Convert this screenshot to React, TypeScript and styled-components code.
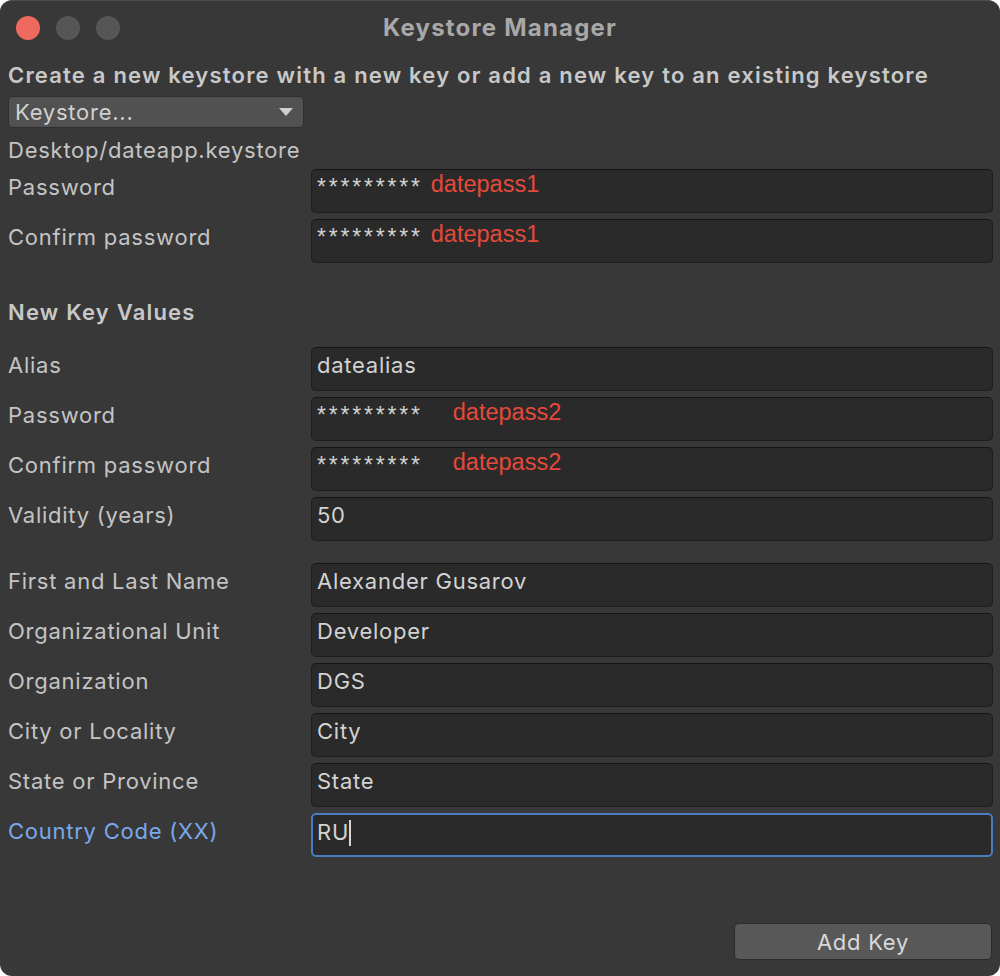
import styled, { createGlobalStyle } from "styled-components";

const GlobalStyle = createGlobalStyle`
    html, body {
        margin: 0;
        padding: 0;
        background: #ffffff;
    }
    body {
        font-family: Inter, "Noto Sans", sans-serif;
    }
`

const Window = styled.div`
    width: 1000px;
    height: 976px;
    box-sizing: border-box;
    background: #383838;
    border-radius: 12px;
    border-top: 1px solid #4e4e4e;
    display: flex;
    flex-direction: column;
    overflow: hidden;
    color: #c4c4c4;
    letter-spacing: 0.75px;
`
const TitleBar = styled.div`
    position: relative;
    height: 53px;
    display: flex;
    align-items: center;
    justify-content: center;
`
const Lights = styled.div`
    position: absolute;
    left: 16px;
    top: 15px;
    display: flex;
    gap: 16px;
`
const Light = styled.span<{ $color: string }>`
    width: 24px;
    height: 24px;
    border-radius: 50%;
    background: ${props => props.$color};
`
const Title = styled.div`
    font-size: 24px;
    font-weight: 700;
    letter-spacing: 1.2px;
    color: #a8a8a8;
    margin-top: -1px;
`
const Body = styled.div`
    flex: 1;
    padding: 0 7px 0 8px;
    display: flex;
    flex-direction: column;
`
const Heading = styled.div<{ $top?: number; $bottom?: number }>`
    font-size: 22px;
    font-weight: 600;
    letter-spacing: 1.2px;
    line-height: 26px;
    color: #c8c8c8;
    margin-top: ${props => props.$top ?? 0}px;
    margin-bottom: ${props => props.$bottom ?? 0}px;
`
const Dropdown = styled.div`
    width: 296px;
    height: 32px;
    box-sizing: border-box;
    margin-top: 8px;
    background: #515151;
    border: 1px solid #2e2e2e;
    border-radius: 4px;
    display: flex;
    align-items: center;
    justify-content: space-between;
    padding: 0 10px 0 6px;
    font-size: 22px;
    color: #d0d0d0;
`
const Arrow = styled.span`
    width: 0;
    height: 0;
    border-left: 7px solid transparent;
    border-right: 7px solid transparent;
    border-top: 8px solid #cfcfcf;
`
const PathText = styled.div`
    font-size: 22px;
    line-height: 28px;
    margin-top: 8px;
    margin-bottom: 5px;
`
const Rows = styled.div`
    display: flex;
    flex-direction: column;
    gap: 6px;
`
const Row = styled.div<{ $gapTop?: number }>`
    display: grid;
    grid-template-columns: 303px 1fr;
    margin-top: ${props => props.$gapTop ?? 0}px;
`
const Label = styled.div<{ $active?: boolean }>`
    font-size: 22px;
    line-height: 36px;
    color: ${props => props.$active ? "#7aa8ea" : "#c4c4c4"};
`
const Field = styled.div<{ $focused?: boolean }>`
    height: 44px;
    box-sizing: border-box;
    background: #2a2a2a;
    border-radius: 5px;
    border: ${props => props.$focused ? "2px solid #4a7cc0" : "1px solid #1e1e1e"};
    border-top-color: ${props => props.$focused ? "#4a7cc0" : "#151515"};
    padding: ${props => props.$focused ? "0 0 0 4px" : "0 0 0 5px"};
    display: flex;
    align-items: flex-start;
    font-size: 22px;
    line-height: ${props => props.$focused ? "34px" : "35px"};
    color: #d2d2d2;
`
const Stars = styled.span`
    font-family: "Liberation Sans", Arial, sans-serif;
    font-size: 23px;
    letter-spacing: 2.8px;
    color: #d0d0d0;
`
const Note = styled.span<{ $offset: number }>`
    font-family: "Liberation Sans", Arial, sans-serif;
    font-size: 23.5px;
    letter-spacing: 0;
    color: #e5493a;
    margin-left: ${props => props.$offset}px;
    margin-top: -3px;
`
const Caret = styled.span`
    display: inline-block;
    width: 2px;
    height: 26px;
    background: #d8d8d8;
    margin-top: 5px;
`
const Footer = styled.div`
    margin-top: auto;
    margin-bottom: 16px;
    display: flex;
    justify-content: flex-end;
`
const Button = styled.button`
    width: 258px;
    height: 37px;
    background: #585858;
    border: 1px solid #2b2b2b;
    border-radius: 5px;
    color: #d8d8d8;
    font-family: Inter, sans-serif;
    font-size: 22px;
    letter-spacing: 0.75px;
    padding: 0;
    margin-right: 1px;
`

function PassField({ note, offset }: { note: string; offset: number }) {
    return (
        <Field>
            <Stars>*********</Stars>
            <Note $offset={offset}>{note}</Note>
        </Field>
    );
}

const details = [
    ["First and Last Name", "Alexander Gusarov"],
    ["Organizational Unit", "Developer"],
    ["Organization", "DGS"],
    ["City or Locality", "City"],
    ["State or Province", "State"],
];

function App() {
    return (
        <>
            <GlobalStyle />
            <Window>
                <TitleBar>
                    <Lights>
                        <Light $color="#ee695e" />
                        <Light $color="#565656" />
                        <Light $color="#565656" />
                    </Lights>
                    <Title>Keystore Manager</Title>
                </TitleBar>
                <Body>
                    <Heading $top={8}>Create a new keystore with a new key or add a new key to an existing keystore</Heading>
                    <Dropdown>
                        <span>Keystore...</span>
                        <Arrow />
                    </Dropdown>
                    <PathText>Desktop/dateapp.keystore</PathText>
                    <Rows>
                        <Row>
                            <Label>Password</Label>
                            <PassField note="datepass1" offset={8} />
                        </Row>
                        <Row>
                            <Label>Confirm password</Label>
                            <PassField note="datepass1" offset={8} />
                        </Row>
                    </Rows>
                    <Heading $top={36} $bottom={22}>New Key Values</Heading>
                    <Rows>
                        <Row>
                            <Label>Alias</Label>
                            <Field>datealias</Field>
                        </Row>
                        <Row>
                            <Label>Password</Label>
                            <PassField note="datepass2" offset={30} />
                        </Row>
                        <Row>
                            <Label>Confirm password</Label>
                            <PassField note="datepass2" offset={30} />
                        </Row>
                        <Row>
                            <Label>Validity (years)</Label>
                            <Field>50</Field>
                        </Row>
                        {details.map(([label, value], index) => (
                            <Row key={label} $gapTop={index === 0 ? 16 : 0}>
                                <Label>{label}</Label>
                                <Field>{value}</Field>
                            </Row>
                        ))}
                        <Row>
                            <Label $active>Country Code (XX)</Label>
                            <Field $focused>RU<Caret /></Field>
                        </Row>
                    </Rows>
                    <Footer>
                        <Button>Add Key</Button>
                    </Footer>
                </Body>
            </Window>
        </>
    );
}

export default App;
